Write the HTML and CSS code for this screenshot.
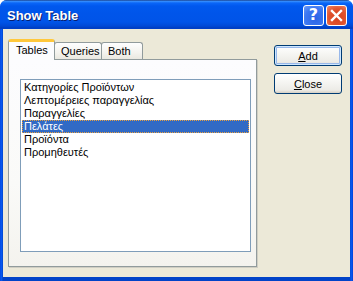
FILE: index.html
```html
<!DOCTYPE html>
<html>
<head>
<meta charset="utf-8">
<link rel="stylesheet" href="styles.css">
</head>
<body>
<div class="window">
  <div class="titlebar">
    <span class="title">Show Table</span>
    <div class="caption-btns">
      <div class="cbtn help"><span>?</span></div>
      <div class="cbtn close">
        <svg width="13" height="13" viewBox="0 0 13 13"><path d="M2 2 L11 11 M11 2 L2 11" stroke="#fff" stroke-width="2.4" stroke-linecap="square"/></svg>
      </div>
    </div>
  </div>
  <div class="client">
    <div class="tabctl">
      <div class="tabs">
        <div class="tab active">Tables</div>
        <div class="tab">Queries</div>
        <div class="tab">Both</div>
      </div>
      <div class="panel">
        <div class="list">
          <div class="row">Κατηγορίες Προϊόντων</div>
          <div class="row">Λεπτομέρειες παραγγελίας</div>
          <div class="row">Παραγγελίες</div>
          <div class="row sel">Πελάτες</div>
          <div class="row">Προϊόντα</div>
          <div class="row">Προμηθευτές</div>
        </div>
      </div>
    </div>
    <div class="buttons">
      <div class="btn def"><span><u>A</u>dd</span></div>
      <div class="btn"><span><u>C</u>lose</span></div>
    </div>
  </div>
</div>
</body>
</html>
```
FILE: styles.css
```css
html, body { margin: 0; padding: 0; }
body { width: 353px; height: 281px; overflow: hidden; font-family: "Liberation Sans", Arial, sans-serif; font-size: 11px; }
.window {
  width: 353px; height: 281px; box-sizing: border-box;
  background: #0831d9;
  border-radius: 7px 7px 0 0;
  display: flex; flex-direction: column;
  padding: 0 3px 4px 3px;
  background: linear-gradient(to right, #0041d8 0, #0a5cf5 1px, #0454e8 2px, #0143c8 3px, #0143c8 350px, #0a5cf5 351px, #0041d8 353px);
}
.titlebar {
  height: 29px; margin: 0 -3px; flex: none;
  border-radius: 7px 7px 0 0;
  background: linear-gradient(to bottom, #0a246a 0, #3d95ff 1px, #0a66f8 3px, #0058ee 6px, #0055ea 14px, #0054e8 22px, #0049d6 26px, #003dc0 28px, #0041cc 29px);
  display: flex; align-items: center; padding: 0 6px 0 7px;
}
.title {
  color: #fff; font-weight: bold; font-size: 13px;
  text-shadow: 1px 1px 0 #0a1e6c;
  flex: 1; margin-top: 1px;
}
.caption-btns { display: flex; gap: 2px; margin-top: 1px; }
.cbtn {
  width: 21px; height: 21px; box-sizing: border-box;
  border: 1px solid #fff; border-radius: 3px;
  display: flex; align-items: center; justify-content: center;
}
.cbtn.help { background: radial-gradient(circle at 60% 65%, #2a63e6 0, #3d78f2 60%, #6d9cf8 100%); }
.cbtn.help span { color: #fff; font-weight: bold; font-size: 16px; font-family: "DejaVu Sans", sans-serif; line-height: 1; }
.cbtn.close { background: radial-gradient(circle at 55% 60%, #d74120 0, #e0532e 55%, #f08a6a 100%); }
.client {
  flex: 1; background: #ece9d8;
  display: flex; padding: 10px 0 0 5px;
}
.tabctl { width: 249px; display: flex; flex-direction: column; }
.tabs { display: flex; align-items: flex-end; height: 20px; position: relative; z-index: 1; }
.tab {
  height: 17px; box-sizing: border-box;
  border: 1px solid #919b9c; border-bottom: none;
  border-radius: 3px 3px 0 0;
  background: linear-gradient(to bottom, #fefefe, #f4f3ee 60%, #eae8e0);
  padding: 2px 5px 0 6px; color: #000;
  margin-left: -1px;
}
.tab:nth-child(2) { width: 48px; }
.tab:nth-child(3) { width: 42px; }
.tab.active {
  height: 21px; width: 47px; margin-left: 0; margin-right: 0;
  background: #fcfcfe;
  border-top: 3px solid #ffc83c; border-radius: 3px 3px 0 0;
  padding: 2px 0 0 7px;
  margin-bottom: -1px;
  position: relative; z-index: 2;
  box-shadow: inset 0 0 0 0 #fff;
}
.tab.active + .tab { margin-left: -1px; }
.panel {
  width: 249px; height: 208px; box-sizing: border-box;
  border: 1px solid #919b9c;
  background: linear-gradient(to bottom, #fcfcfe 0, #fafaf8 60%, #f4f3ee 100%);
  box-shadow: 1px 1px 0 #d0cec3;
  padding: 19px 6px 0 11px;
}
.list {
  width: 231px; height: 173px; box-sizing: border-box;
  border: 1px solid #7f9db9; background: #fff;
  padding: 1px;
}
.row { height: 13px; line-height: 13px; padding-left: 2px; color: #000; white-space: nowrap; box-sizing: border-box; }
.row.sel {
  background: #316ac5; color: #fff;
  outline: 1px dotted #e8a040; outline-offset: -1px;
  line-height: 11px; border: 1px dotted #d98b2b;
  padding-left: 1px;
}
.buttons { display: flex; flex-direction: column; gap: 7px; margin: 6px 0 0 17px; }
.btn {
  width: 68px; height: 21px; box-sizing: border-box;
  border: 1px solid #003c74; border-radius: 3px;
  background: linear-gradient(to bottom, #ffffff 0, #f6f6f3 40%, #ecebe6 85%, #d6d0c5 100%);
  display: flex; align-items: center; justify-content: center;
  color: #000;
}
.btn.def { box-shadow: inset 0 0 0 1px #cee7ff, inset 0 0 0 2px #98b8ea; }
```
